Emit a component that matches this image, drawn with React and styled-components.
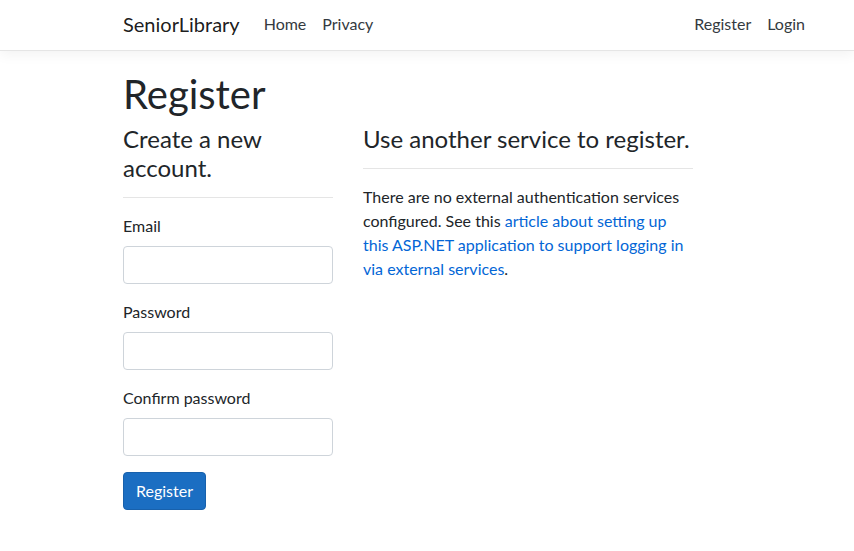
import React from 'react'
import styled, { createGlobalStyle } from 'styled-components';

const Global = createGlobalStyle`
  * { box-sizing: border-box; }
  html, body { margin: 0; background: #fff; }
  body {
    font-family: Lato, "Noto Sans", sans-serif;
    font-size: 16px;
    line-height: 1.5;
    color: #212529;
  }
`;

function App() {
  return (
    <>
      <Global />
      <Navbar>
        <NavInner>
          <Brand href="#">SeniorLibrary</Brand>
          <NavList>
            <NavLink href="#">Home</NavLink>
            <NavLink href="#">Privacy</NavLink>
          </NavList>
          <NavList right>
            <NavLink href="#">Register</NavLink>
            <NavLink href="#">Login</NavLink>
          </NavList>
        </NavInner>
      </Navbar>
      <Main>
        <Title>Register</Title>
        <Row>
          <LeftCol>
            <SubTitle>Create a new account.</SubTitle>
            <Rule />
            <FormGroup>
              <Label>Email</Label>
              <Input type="email" />
            </FormGroup>
            <FormGroup>
              <Label>Password</Label>
              <Input type="password" />
            </FormGroup>
            <FormGroup>
              <Label>Confirm password</Label>
              <Input type="password" />
            </FormGroup>
            <SubmitButton type="button">Register</SubmitButton>
          </LeftCol>
          <RightCol>
            <SubTitle>Use another service to register.</SubTitle>
            <Rule />
            <Text>
              There are no external authentication services configured. See this{' '}
              <Link href="#">article about setting up this ASP.NET application to support logging in via external services</Link>.
            </Text>
          </RightCol>
        </Row>
      </Main>
    </>
  )
}

export default App;

const Navbar = styled.nav`
  height: 51px;
  background: #fff;
  border-bottom: 1px solid #e5e5e5;
  box-shadow: 0 4px 12px rgba(0, 0, 0, 0.05);
  margin-bottom: 16px;
`;

const NavInner = styled.div`
  display: flex;
  align-items: center;
  height: 48px;
  width: 690px;
  margin-left: 123px;
`;

const Brand = styled.a`
  font-size: 20px;
  color: rgba(0, 0, 0, 0.9);
  text-decoration: none;
  margin-right: 16px;
  line-height: 30px;
`;

const NavList = styled.div`
  display: flex;
  margin-left: ${p => (p.right ? 'auto' : '0')};
`;

const NavLink = styled.a`
  padding: 0 8px;
  color: #343a40;
  text-decoration: none;
  font-size: 16px;
`;

const Main = styled.main`
  width: 690px;
  margin-left: 123px;
`;

const Title = styled.h1`
  font-size: 40px;
  font-weight: 400;
  line-height: 1.2;
  margin: 0 0 7px;
  padding-top: 3px;
`;

const Row = styled.div`
  display: flex;
  gap: 30px;
`;

const LeftCol = styled.section`
  width: 210px;
`;

const RightCol = styled.section`
  width: 330px;
`;

const SubTitle = styled.h4`
  font-size: 24px;
  font-weight: 400;
  line-height: 1.2;
  margin: 0;
`;

const Rule = styled.hr`
  border: 0;
  border-top: 1px solid rgba(0, 0, 0, 0.1);
  margin: 14px 0 16px;
`;

const FormGroup = styled.div`
  margin-bottom: 16px;
`;

const Label = styled.label`
  display: block;
  margin-bottom: 8px;
`;

const Input = styled.input`
  display: block;
  width: 100%;
  height: 38px;
  padding: 6px 12px;
  font-size: 16px;
  border: 1px solid #ced4da;
  border-radius: 4px;
  background: #fff;
`;

const SubmitButton = styled.button`
  font-family: inherit;
  font-size: 16px;
  line-height: 1.5;
  color: #fff;
  background: #1b6ec2;
  border: 1px solid #1861ac;
  border-radius: 4px;
  padding: 6px 12px;
  cursor: pointer;
`;

const Text = styled.p`
  margin: 0;
`;

const Link = styled.a`
  color: #0366d6;
  text-decoration: none;
`;
